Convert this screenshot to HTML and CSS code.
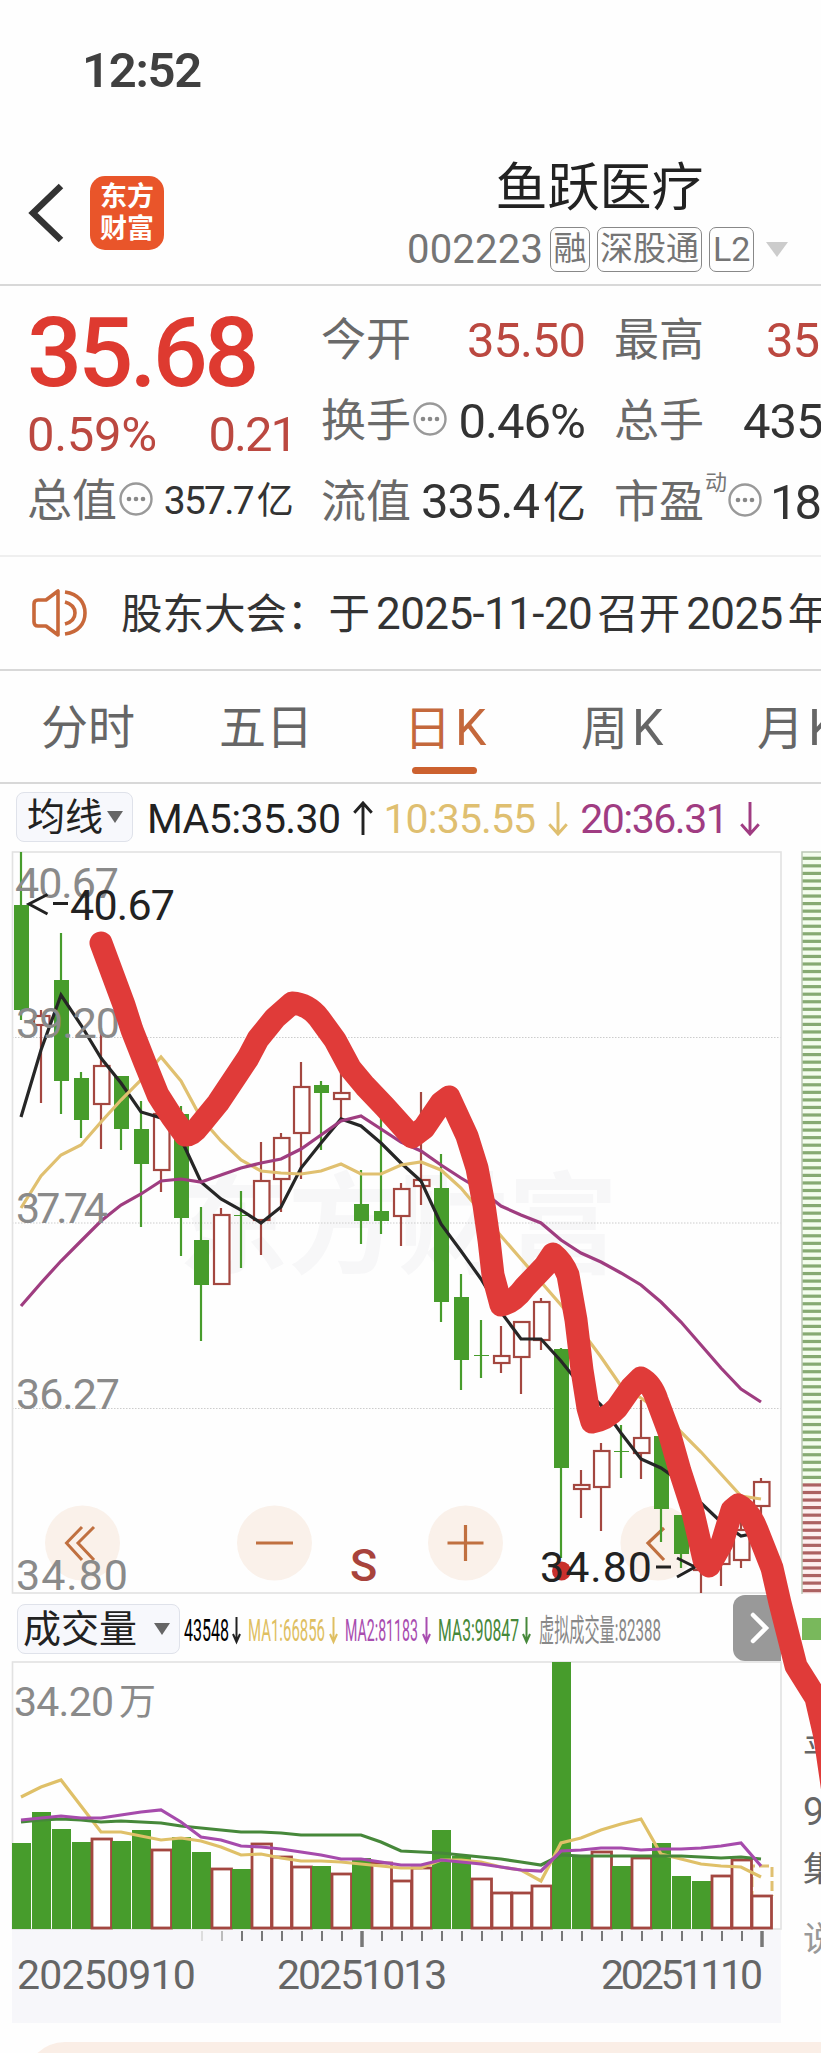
FILE: index.html
```
<!DOCTYPE html>
<html lang="zh-CN">
<head>
  <meta charset="UTF-8" />
  <title>鱼跃医疗 002223</title>
  <link rel="stylesheet" href="styles.css">
</head>
<body>
  <svg class="defs" width="0" height="0">
    <symbol id="more" viewBox="0 0 34 34">
      <circle cx="17" cy="17" r="15.5" fill="none" stroke="#999" stroke-width="2.4" />
      <circle cx="10" cy="17" r="2.3" fill="#888" />
      <circle cx="17" cy="17" r="2.3" fill="#888" />
      <circle cx="24" cy="17" r="2.3" fill="#888" />
    </symbol>
    <symbol id="down" viewBox="0 0 20 36">
      <path d="M10 1V34M1 24L10 34L19 24" fill="none" stroke="currentColor" stroke-width="3" />
    </symbol>
  </svg>

  <div class="status">12:52</div>

  <header class="header">
    <svg class="back" width="36" height="60" viewBox="0 0 36 60"><path d="M33 3L5 30L33 57" fill="none" stroke="#333" stroke-width="6.5" /></svg>
    <div class="logo">东方<br>财富</div>
    <div class="title">
      <h1>鱼跃医疗</h1>
      <div class="sub">
        <span class="code">002223</span>
        <span class="tag">融</span>
        <span class="tag">深股通</span>
        <span class="tag l2">L2</span>
        <i class="tri light"></i>
      </div>
    </div>
  </header>

  <section class="quote">
    <div class="main">
      <div class="price">35.68</div>
      <div class="row change"><b>0.59%</b><b>0.21</b></div>
      <div class="row"><span>总值</span><svg class="more"><use href="#more" /></svg><b class="small">357.7<em>亿</em></b></div>
    </div>
    <div class="col">
      <div class="row"><span>今开</span><b class="red">35.50</b></div>
      <div class="row"><span>换手</span><svg class="more"><use href="#more" /></svg><b>0.46%</b></div>
      <div class="row"><span>流值</span><b>335.4<em>亿</em></b></div>
    </div>
    <div class="col last">
      <div class="row"><span>最高</span><b class="red high">35</b></div>
      <div class="row"><span>总手</span><b class="hands">435</b></div>
      <div class="row"><span>市盈</span><sup>动</sup><svg class="more"><use href="#more" /></svg><b class="pe">18</b></div>
    </div>
  </section>

  <section class="news">
    <svg width="56" height="48" viewBox="0 0 56 48" fill="none" stroke="#c8683a" stroke-width="3.6" stroke-linejoin="round">
      <path d="M2 15Q2 11 6 11H14L26 2V46L14 37H6Q2 37 2 33Z" />
      <path d="M33 3C47 5 53 14 53 24S47 43 33 45M33 13C40 15 43 19 43 24S40 33 33 35" />
    </svg>
    <p>股东大会：于<b>2025-11-20</b>召开<b>2025</b>年</p>
  </section>

  <nav class="tabs">
    <a>分时</a><a>五日</a><a class="on">日<b>K</b></a><a>周<b>K</b></a><a>月<b>K</b></a>
  </nav>

  <section class="charts">
    <div class="legend">
      <div class="btn">均线<i class="tri"></i></div>
      <span class="ma ma5">MA5:35.30<svg class="arrow up"><use href="#down" /></svg></span>
      <span class="ma ma10">10:35.55<svg class="arrow"><use href="#down" /></svg></span>
      <span class="ma ma20">20:36.31<svg class="arrow"><use href="#down" /></svg></span>
    </div>

    <svg id="kline" width="821" height="748" viewBox="0 848 821 748"></svg>

    <div class="legend vol">
      <div class="btn wide">成交量<i class="tri"></i></div>
      <svg width="480" height="50" viewBox="184 1603 480 50" class="vtext">
        <text x="184" y="1640" textLength="45" lengthAdjust="spacingAndGlyphs">43548</text>
        <text x="248" y="1640" textLength="77" lengthAdjust="spacingAndGlyphs" class="y">MA1:66856</text>
        <text x="345" y="1640" textLength="73" lengthAdjust="spacingAndGlyphs" class="p">MA2:81183</text>
        <text x="438" y="1640" textLength="81" lengthAdjust="spacingAndGlyphs" class="g">MA3:90847</text>
        <text x="539" y="1640" textLength="122" lengthAdjust="spacingAndGlyphs" class="n">虚拟成交量:82388</text>
        <path d="M236.500 1616V1641M233 1633L236.500 1641L240 1633" stroke="#222" />
        <path d="M333.500 1616V1641M330 1633L333.500 1641L337 1633" stroke="#dfbf62" />
        <path d="M426.500 1616V1641M423 1633L426.500 1641L430 1633" stroke="#a84db0" />
        <path d="M526.500 1616V1641M523 1633L526.500 1641L530 1633" stroke="#46883a" />
      </svg>
      <div class="next"><svg width="20" height="32" viewBox="0 0 20 32"><path d="M3 3L16 16L3 29" fill="none" stroke="#fff" stroke-width="4.500" stroke-linecap="round" /></svg></div>
      <i class="swatch"></i>
    </div>

    <svg id="volume" width="821" height="268" viewBox="0 1661 821 268"></svg>

    <div class="axis">
      <svg id="ticks" width="769" height="20" viewBox="12 1930 769 20"></svg>
      <div class="dates"><span>20250910</span><span>20251013</span><span>20251110</span></div>
    </div>

    <svg class="pen" width="821" height="890" viewBox="0 920 821 890">
      <path d="M101 943L124 1005L132 1030L145 1063L158 1095L172 1117L185 1135Q192 1136 200 1125L218 1103L238 1073L248 1058L258 1039L275 1018L292 1003Q308 1004 319 1018L335 1040L350 1068L365 1086L385 1107L412 1137L424 1128L441 1103L449 1097L467 1136L477 1168L484 1205L489 1240L493 1275L501 1305Q513 1303 525 1287L545 1266L553 1254Q563 1262 568 1275L576 1320L582 1370L588 1408L592 1422Q606 1420 617 1408L631 1388L641 1378Q652 1384 657 1400L669 1432L680 1471L692 1508L704 1560L709 1566L722 1543L732 1510L738 1505Q749 1510 757 1530L772 1568L780 1603L796 1666L816 1698L825 1737L833 1792" />
    </svg>
  </section>

  <div class="card"></div>

  <script src="chart.js"></script>
</body>
</html>
```
FILE: styles.css
```
body {
  margin: 0;
  width: 821px;
  height: 2053px;
  overflow: hidden;
  position: relative;
  background: #fefefe;
  color: #333;
  font-family: Roboto, "Noto Sans CJK SC", sans-serif;
}

.defs {
  position: absolute;
}

b {
  font-weight: 400;
}

em {
  font-style: normal;
}

.status {
  height: 140px;
  padding: 42px 0 0 82px;
  box-sizing: border-box;
  font-size: 49px;
  line-height: 58px;
  font-weight: 600;
  letter-spacing: -1.3px;
  color: #404040;
}

.header {
  display: flex;
  height: 146px;
  padding-left: 28px;
  border-bottom: 2px solid #d8d8d8;
  box-sizing: border-box;
}

.back {
  margin-top: 43px;
}

.logo {
  width: 74px;
  height: 74px;
  margin: 36px 0 0 26px;
  padding-top: 5px;
  box-sizing: border-box;
  border-radius: 15px;
  background: #e9552a;
  color: #fff;
  font-size: 27px;
  line-height: 32px;
  font-weight: 700;
  text-align: center;
}

.title {
  width: 382px;
  margin: 17px 0 0 243px;
}

h1 {
  margin: 0;
  padding-left: 3px;
  font-size: 52px;
  line-height: 64px;
  font-weight: 400;
  color: #222;
  text-align: center;
}

.sub {
  display: flex;
  align-items: center;
  gap: 7px;
  margin-top: 6px;
  color: #757575;
  white-space: nowrap;
}

.code {
  font-size: 40px;
  line-height: 44px;
  letter-spacing: 0.2px;
}

.tag {
  width: 40px;
  height: 45px;
  flex: none;
  box-sizing: border-box;
  border: 1.5px solid #888;
  border-radius: 7px;
  font-size: 33px;
  line-height: 42px;
  text-align: center;
}

.tag:nth-child(3) {
  width: 105px;
}

.tag.l2 {
  width: 45px;
  font-size: 34px;
  line-height: 42px;
}

.tri {
  width: 0;
  height: 0;
  border: 8px solid transparent;
  border-top: 12px solid #666;
  border-bottom: 0;
}

.tri.light {
  margin-left: 5px;
  border-width: 15px 11px 0;
  border-top-color: #ccc;
}

/* quote */
.quote {
  display: grid;
  grid-template-columns: 265px 264px 264px;
  gap: 29px;
  height: 271px;
  padding: 14px 0 0 27px;
  box-sizing: border-box;
  border-bottom: 2px solid #efefef;
}

.row {
  display: flex;
  align-items: center;
  height: 81px;
  font-size: 45px;
  line-height: 81px;
}

.row span {
  color: #6a6a6a;
}

.row b {
  margin-left: auto;
  font-size: 49px;
  letter-spacing: -1px;
}

.row em {
  font-size: 43px;
  margin-left: 4px;
}

.row .small {
  font-size: 39px;
  letter-spacing: -1.8px;
}

.row .small em {
  font-size: 37px;
}

.more {
  width: 34px;
  height: 34px;
  margin: -5px 0 0 2px;
}

.row .red,
.row.change {
  color: #bb4840;
}

.price {
  height: 109px;
  font-size: 97px;
  line-height: 107px;
  font-weight: 500;
  letter-spacing: -3.8px;
  color: #de3a30;
}

.row.change {
  height: 52px;
  line-height: 50px;
  justify-content: space-between;
}

.row.change b {
  margin: 0;
  letter-spacing: -0.3px;
}

.row.change b + b {
  margin-right: -4px;
  letter-spacing: -2px;
}

.last b {
  margin-left: 0;
}

.last .high { margin-left: 62px; }
.last .hands { margin-left: 39px; }
.last .pe { margin-left: 8px; letter-spacing: -3px; }

.last .more {
  margin-left: 1px;
}

sup {
  font-size: 22px;
  line-height: 24px;
  margin: -40px 0 0 1px;
  color: #777;
}

/* news */
.news {
  display: flex;
  align-items: center;
  height: 114px;
  padding-left: 32px;
  box-sizing: border-box;
  border-bottom: 2px solid #d8d8d8;
  white-space: nowrap;
}

.news svg {
  flex: none;
}

.news p {
  margin: -5px 0 0 33px;
  font-size: 41.500px;
}

.news b {
  margin: 0 5px 0 6px;
  font-size: 44px;
  letter-spacing: -0.6px;
}

/* tabs */
.tabs {
  display: flex;
  height: 113px;
  padding-left: 41px;
  box-sizing: border-box;
  border-bottom: 2px solid #d8d8d8;
  font-size: 47px;
  line-height: 114px;
  color: #666;
}

.tabs a {
  position: relative;
  flex: none;
  width: 179px;
}

.tabs b {
  margin-left: 4px;
  font-size: 50px;
}

.tabs a:nth-child(2) {
  left: -1px;
}

.tabs .on {
  left: 5px;
  color: #c4683c;
}

.tabs a:nth-child(4) {
  left: 3px;
}

.tabs .on::after {
  content: "";
  position: absolute;
  left: 8px;
  top: 96px;
  width: 65px;
  height: 7px;
  border-radius: 4px;
  background: #cc612f;
}

/* charts */
.charts {
  position: relative;
}

.charts > svg {
  display: block;
}

.legend {
  display: flex;
  align-items: center;
  height: 64px;
  padding: 2px 0 0 16px;
  box-sizing: border-box;
}

.btn {
  display: flex;
  align-items: center;
  justify-content: space-between;
  width: 117px;
  height: 50px;
  padding: 0 9px 0 10px;
  box-sizing: border-box;
  border: 1.5px solid #dfe2ea;
  border-radius: 8px;
  background: #f7f8fc;
  color: #222;
  font-size: 38px;
  line-height: 46px;
}

.btn.wide {
  width: 163px;
  padding-left: 5px;
}

.ma {
  display: flex;
  align-items: center;
  font-size: 41px;
  line-height: 56px;
  padding-top: 3px;
}

.ma5 {
  margin-left: 14px;
  letter-spacing: -0.6px;
  color: #222;
}

.ma10 {
  margin-left: 10px;
  letter-spacing: -0.9px;
  color: #dfbf70;
}

.ma20 {
  margin-left: 12px;
  letter-spacing: -1.500px;
  color: #a03c82;
}

.arrow {
  width: 20px;
  height: 35px;
  margin-left: 13px;
}

.up {
  transform: rotate(180deg);
}

.legend.vol {
  height: 65px;
  padding: 0 0 0 17px;
}

.vtext {
  margin-left: 4px;
  font-size: 31px;
}

.vtext path {
  fill: none;
  stroke-width: 2;
}

.vtext .y { fill: #dfbf62; }
.vtext .p { fill: #a84db0; }
.vtext .g { fill: #46883a; }
.vtext .n { fill: #888; }

.next {
  display: flex;
  align-items: center;
  justify-content: center;
  width: 48px;
  height: 66px;
  margin: -2px 0 0 69px;
  border-radius: 12px 0 0 12px;
  background: #999;
}

.next svg {
  margin-right: -6px;
}

.swatch {
  width: 19px;
  height: 22px;
  margin-left: 21px;
  background: #79b85c;
}

.axis {
  width: 769px;
  height: 94px;
  margin-left: 12px;
  background: #f7f7fa;
}

.axis svg {
  display: block;
}

.dates {
  display: grid;
  grid-template-columns: 260px 324px 1fr;
  padding: 3px 0 0 5px;
  font-size: 41px;
  line-height: 47px;
  letter-spacing: -0.8px;
  color: #666;
}

.dates span + span {
  letter-spacing: -2px;
}

.dates span:last-child {
  letter-spacing: -3.2px;
}

.pen {
  position: absolute;
  left: 0;
  top: 136px;
}

.pen path {
  fill: none;
  stroke: #e03b39;
  stroke-width: 23;
  stroke-linecap: round;
  stroke-linejoin: round;
}

.card {
  height: 40px;
  margin: 19px 0 0 25px;
  border-radius: 40px 0 0 0;
  background: #faeee6;
}
```
FILE: chart.js
```
const GREEN = '#479c2c', RED = '#a34740';
const X0 = 21, STEP = 20;

// [up/down, high, body top, body bottom, low]
const candles = [
  ['g', 852, 905, 1010, 1020], ['r', 1010, 1016, 1025, 1103], ['g', 933, 980, 1081, 1114],
  ['g', 1072, 1078, 1120, 1138], ['r', 1028, 1066, 1104, 1149], ['g', 1076, 1076, 1129, 1150],
  ['g', 1101, 1129, 1164, 1227], ['r', 1112, 1114, 1170, 1192], ['g', 1106, 1114, 1218, 1256],
  ['g', 1207, 1240, 1285, 1341], ['r', 1208, 1215, 1284, 1284], ['g', 1191, 1215, 1216, 1268],
  ['r', 1142, 1181, 1220, 1255], ['r', 1133, 1138, 1179, 1212], ['r', 1062, 1087, 1133, 1179],
  ['g', 1081, 1085, 1093, 1150], ['r', 1055, 1093, 1099, 1119], ['g', 1170, 1204, 1221, 1244],
  ['g', 1115, 1211, 1221, 1234], ['r', 1183, 1189, 1216, 1246], ['r', 1092, 1180, 1186, 1205],
  ['g', 1154, 1188, 1302, 1322], ['g', 1274, 1297, 1360, 1390], ['g', 1320, 1355, 1356, 1378],
  ['r', 1326, 1356, 1363, 1373], ['r', 1322, 1322, 1357, 1394], ['r', 1298, 1302, 1340, 1350],
  ['g', 1348, 1349, 1468, 1558], ['r', 1470, 1485, 1489, 1518], ['r', 1443, 1451, 1487, 1531],
  ['g', 1425, 1451, 1452, 1478], ['r', 1400, 1438, 1453, 1479], ['g', 1430, 1436, 1509, 1542],
  ['g', 1515, 1515, 1554, 1568], ['r', 1540, 1565, 1570, 1593], ['r', 1530, 1540, 1564, 1586],
  ['r', 1520, 1530, 1560, 1568], ['r', 1478, 1482, 1506, 1515]
];

const ma5 = [1117, 1050, 995, 1025, 1058, 1083, 1112, 1118, 1139, 1182, 1199, 1210, 1223, 1207, 1168, 1143, 1119, 1126, 1143, 1163, 1181, 1224, 1251, 1279, 1312, 1339, 1339, 1361, 1386, 1405, 1433, 1459, 1468, 1482, 1503, 1522, 1536, 1532];
const ma10 = [1208, 1176, 1155, 1145, 1122, 1100, 1080, 1057, 1081, 1118, 1141, 1160, 1171, 1173, 1174, 1171, 1164, 1174, 1174, 1165, 1162, 1170, 1188, 1212, 1236, 1259, 1282, 1305, 1330, 1357, 1386, 1398, 1412, 1432, 1452, 1474, 1496, 1499];
const ma20 = [1306, 1283, 1261, 1241, 1221, 1205, 1194, 1181, 1179, 1182, 1175, 1168, 1163, 1159, 1149, 1135, 1121, 1116, 1129, 1142, 1151, 1165, 1178, 1190, 1206, 1215, 1223, 1240, 1253, 1262, 1273, 1285, 1302, 1322, 1345, 1368, 1389, 1402];

const volumes = [1843, 1812, 1829, 1842, 1839, 1841, 1830, 1850, 1837, 1852, 1869, 1869, 1844, 1857, 1867, 1866, 1874, 1858, 1863, 1881, 1868, 1830, 1856, 1879, 1893, 1893, 1886, 1662, 1856, 1852, 1866, 1858, 1843, 1876, 1881, 1876, 1860, 1896];
const volColors = 'ggggrggrggrgrrrgrgrrrggrrrrggrgrgggrrr';
const vma1 = [1797, 1787, 1780, 1806, 1832, 1832, 1836, 1840, 1838, 1841, 1847, 1855, 1854, 1858, 1861, 1861, 1862, 1864, 1866, 1868, 1868, 1860, 1860, 1862, 1867, 1870, 1881, 1843, 1838, 1830, 1824, 1819, 1854, 1859, 1864, 1866, 1867, 1877];
const vma2 = [1820, 1818, 1816, 1818, 1818, 1815, 1812, 1810, 1822, 1837, 1840, 1846, 1847, 1849, 1852, 1855, 1859, 1859, 1862, 1865, 1865, 1860, 1862, 1864, 1867, 1870, 1871, 1851, 1850, 1848, 1848, 1850, 1849, 1849, 1848, 1846, 1843, 1866];
const vma3 = [1822, 1820, 1819, 1820, 1822, 1821, 1822, 1823, 1826, 1828, 1830, 1832, 1832, 1833, 1835, 1835, 1835, 1835, 1842, 1851, 1852, 1853, 1855, 1857, 1859, 1862, 1865, 1855, 1856, 1856, 1856, 1856, 1856, 1856, 1857, 1858, 1857, 1859];

const x = i => X0 + i * STEP;
const rect = (x, y, w, h, fill, stroke = 'none', sw = 0) =>
  `<rect x="${x}" y="${y}" width="${w}" height="${h}" fill="${fill}" stroke="${stroke}" stroke-width="${sw}"/>`;
const path = (d, stroke, sw = 2.2, extra = '') =>
  `<path d="${d}" fill="none" stroke="${stroke}" stroke-width="${sw}" ${extra}/>`;
const line = (ys, color) => path('M' + ys.map((y, i) => `${x(i)} ${y}`).join('L'), color, 3.2);
const text = (s, x, y, size, len, fill, weight = 400) =>
  `<text x="${x}" y="${y}" font-size="${size}" textLength="${len}" fill="${fill}" font-weight="${weight}">${s}</text>`;

// K line
let k = text('东方财富', 178, 1265, 110, 440, '#f7f7f8', 700);
[1037.5, 1223, 1408.5].forEach(y => k += path(`M12 ${y}H781`, '#ccc', 1, 'stroke-dasharray="1.5 1.500"'));
k += rect(12.5, 852, 768.5, 741, 'none', '#e2e2e2', 1.6);

// round buttons
[82.5, 274.5, 465.5, 658].forEach(cx => k += `<circle cx="${cx}" cy="1543" r="37.5" fill="#faf1ea"/>`);
k += path('M82 1527L66.500 1543L82 1560M94 1527L78 1543L94 1560', '#c07040', 3);
k += path('M256 1543H293M447.500 1543H483.500M465.500 1525V1561M664 1528L648 1543L664 1560', '#c07040', 3.2);

candles.forEach(([c, hi, top, bot, lo], i) => {
  const cx = x(i);
  if (c === 'g') {
    k += path(`M${cx} ${hi}V${lo}`, GREEN) + rect(cx - 7, top, 15, bot - top, GREEN);
  } else {
    k += path(`M${cx} ${hi}V${top}M${cx} ${bot}V${lo}`, RED);
    k += rect(cx - 7, top, 15.5, bot - top, '#fff', RED, 2.2);
  }
});
k += line(ma5, '#262626') + line(ma10, '#e0c070') + line(ma20, '#9f3d80');

k += text('40.67', 15, 898, 43, 104, '#8a8a8a') + text('39.20', 16, 1038, 43, 104, '#8a8a8a');
k += text('37.74', 16, 1223, 43, 92, '#8a8a8a') + text('36.27', 16, 1409, 43, 104, '#8a8a8a');
k += text('34.80', 16, 1590, 43, 112, '#8a8a8a');
k += path('M47.500 894.500L29 904L47.500 914M53 903.500H68', '#222', 3) + text('40.67', 70, 920, 43, 105, '#222');
k += `<circle cx="561.5" cy="1571" r="9.500" fill="#c9302c"/>`;
k += text('34.80', 540, 1582, 43, 112, '#222') + path('M656 1567H671M677 1558L695 1567L677 1577', '#222', 3);
k += text('S', 350, 1581, 45, 27, '#a8433c', 500);

// order book depth
k += rect(802, 852, 30, 634, '#f4fdee') + rect(802, 1486, 30, 108, '#fdf0f0');
for (let y = 858.3; y < 1592; y += 7.55) {
  k += path(`M802 ${y}H821`, y < 1484 ? '#86aa72' : '#ac6262', 3.2);
}
k += path('M802 1594V852H821', '#bcc8b6', 1.5);
document.getElementById('kline').innerHTML = k;

// volume
let v = rect(12.5, 1662, 768.5, 267, 'none', '#e2e2e2', 1.6);
v += path('M752 1929V1866H772V1896', '#e0c070', 3, 'stroke-dasharray="10 4"');
volumes.forEach((top, i) => {
  const left = 12 + i * STEP;
  v += volColors[i] === 'g'
    ? rect(left, top, 19, 1929 - top, GREEN)
    : rect(left, top, 19.5, 1928 - top, '#fff', RED, 2.8);
});
v += line(vma1, '#dfc068') + line(vma3, '#46883a') + line(vma2, '#a64bac');
v += text('34.20', 14, 1716, 41, 100, '#8a8a8a') + text('万', 119, 1715, 37, 37, '#8a8a8a');
[['平', 1763, '#666'], ['9', 1825, '#666'], ['集', 1881, '#666'], ['说', 1951, '#999']]
  .forEach(([s, y, c]) => v += `<text x="803" y="${y}" font-size="${s === '9' ? 38 : 34}" fill="${c}">${s}</text>`);
const vol = document.getElementById('volume');
vol.innerHTML = v;
vol.style.overflow = 'visible';

// date ticks
let t = '';
for (let i = 9; i < 38; i++) {
  const big = i === 17 || i === 37;
  t += path(`M${x(i) + 1} 1932V${big ? 1948 : 1942}`, i === 9 ? '#ddd' : i === 10 ? '#bbb' : '#777', big ? 3.5 : 2);
}
document.getElementById('ticks').innerHTML = t;
```
